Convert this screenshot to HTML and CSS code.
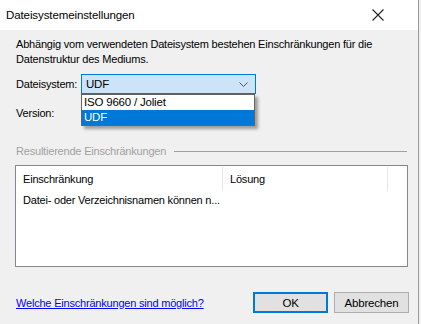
FILE: index.html
```html
<!DOCTYPE html>
<html lang="de">
<head>
    <meta charset="UTF-8">
    <title>Dateisystemeinstellungen</title>
    <link rel="stylesheet" href="styles.css">
</head>
<body>
    <div class="window">
        <header class="titlebar">
            <span class="title">Dateisystemeinstellungen</span>
            <svg class="close" width="12" height="12" viewBox="0 0 12 12">
                <path d="M0.5 0.5 L11.5 11.5 M11.5 0.5 L0.5 11.5" stroke="#222" stroke-width="1.1" fill="none"/>
            </svg>
        </header>
        <main class="content">
            <p class="intro">Abhängig vom verwendeten Dateisystem bestehen Einschränkungen für die Datenstruktur des Mediums.</p>

            <div class="field">
                <label class="field-label">Dateisystem:</label>
                <div class="combo open">
                    <span>UDF</span>
                    <svg class="chevron" width="9" height="5" viewBox="0 0 9 5">
                        <path d="M0.5 0.5 L4.5 4.5 L8.5 0.5" stroke="#555" fill="none"/>
                    </svg>
                    <ul class="dropdown">
                        <li>ISO 9660 / Joliet</li>
                        <li class="selected">UDF</li>
                    </ul>
                </div>
            </div>
            <div class="field">
                <label class="field-label">Version:</label>
            </div>

            <div class="group">
                <span class="group-label">Resultierende Einschränkungen</span>
                <span class="group-line"></span>
            </div>

            <div class="listview">
                <div class="list-header">
                    <div class="col col-1">Einschränkung</div>
                    <div class="col col-2">Lösung</div>
                </div>
                <div class="list-row">
                    <div class="col col-1">Datei- oder Verzeichnisnamen können n...</div>
                </div>
            </div>

            <footer class="actions">
                <a href="#" class="help-link">Welche Einschränkungen sind möglich?</a>
                <div class="buttons">
                    <button class="btn btn-default">OK</button>
                    <button class="btn">Abbrechen</button>
                </div>
            </footer>
        </main>
    </div>
</body>
</html>
```

FILE: styles.css
```css
body {
    margin: 0;
    background: #f0f0f0;
    font-family: "Liberation Sans", Arial, sans-serif;
    font-size: 11px;
    letter-spacing: -0.2px;
    color: #000;
}

.window {
    width: 418px;
    height: 324px;
    background: #f0f0f0;
    border-right: 1px solid #9a9a9a;
}

.titlebar {
    height: 30px;
    background: #fff;
    display: flex;
    align-items: center;
    justify-content: space-between;
    padding: 0 34px 0 6px;
}

.title {
    font-size: 11.5px;
    letter-spacing: -0.1px;
}

.content {
    padding: 7px 10px 0 16px;
}

.intro {
    margin: 0;
    line-height: 15px;
    width: 372px;
}

.field {
    display: flex;
    align-items: center;
    height: 20px;
}

.field:first-of-type {
    margin-top: 7px;
}

.field + .field {
    margin-top: 9px;
}

.field-label {
    width: 66px;
}

.combo {
    position: relative;
    height: 18px;
    border: 1px solid #0078d7;
    background: #cce4f7;
    display: flex;
    align-items: center;
    justify-content: space-between;
    padding: 0 7px 0 4px;
    margin-left: -1px;
    width: 162px;
    font-size: 11.5px;
}

.dropdown {
    position: absolute;
    left: -1px;
    top: 19px;
    width: 172px;
    margin: 0;
    padding: 0;
    list-style: none;
    background: #fff;
    border: 1px solid #646464;
    box-shadow: 3px 3px 3px rgba(0, 0, 0, 0.35);
}

.dropdown li {
    height: 15px;
    line-height: 15px;
    padding-left: 2px;
}

.dropdown li.selected {
    background: #0078d7;
    color: #fff;
}

.group {
    display: flex;
    align-items: center;
    margin-top: 21px;
    height: 14px;
}

.group-label {
    color: #a0a0a0;
}

.group-line {
    flex: 1;
    height: 1px;
    background: #a0a0a0;
    margin-left: 8px;
    margin-right: 1px;
}

.listview {
    margin-top: 7px;
    margin-left: -1px;
    width: 391px;
    height: 100px;
    background: #fff;
    border: 1px solid #828790;
}

.list-header,
.list-row {
    display: flex;
    height: 22px;
    align-items: center;
}

.list-header {
    height: 24px;
    margin-top: 1px;
}

.col {
    padding-left: 7px;
    box-sizing: border-box;
    white-space: nowrap;
}

.list-header .col {
    height: 24px;
    line-height: 24px;
}

.col-1 {
    width: 207px;
}

.list-header .col-1 {
    border-right: 1px solid #e5e5e5;
}

.col-2 {
    width: 165px;
    border-right: 1px solid #e5e5e5;
}

.list-row {
    margin-top: -2px;
}

.actions {
    display: flex;
    justify-content: space-between;
    align-items: center;
    margin-top: 25px;
}

.help-link {
    color: #0000ff;
    text-decoration: underline;
}

.buttons {
    display: flex;
    gap: 6px;
    margin-right: -1px;
}

.btn {
    width: 75px;
    height: 21px;
    font-family: "Liberation Sans", Arial, sans-serif;
    font-size: 11.5px;
    letter-spacing: -0.2px;
    background: #e1e1e1;
    border: 1px solid #adadad;
    padding: 0;
    color: #000;
}

.btn-default {
    border: 2px solid #0078d7;
}
```
